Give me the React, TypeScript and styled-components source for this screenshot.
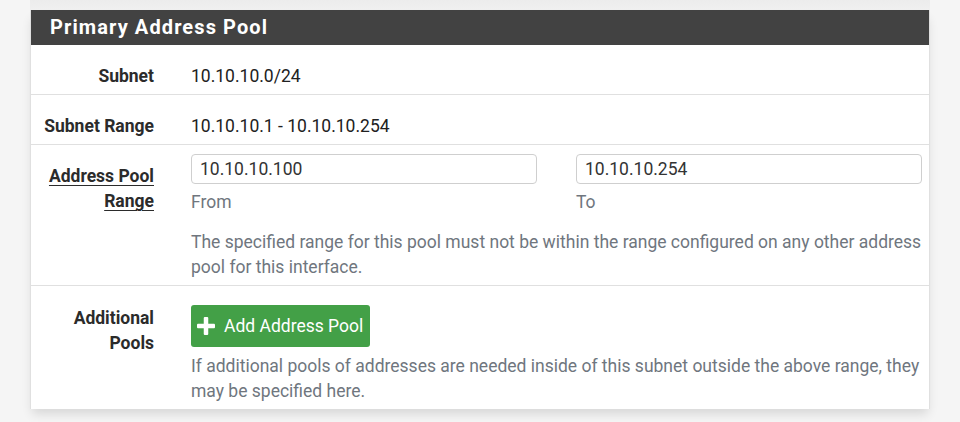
import React from 'react';
import styled, { createGlobalStyle } from 'styled-components';

const GlobalStyle = createGlobalStyle`
   body {
      margin: 0;
      background: #f5f5f5;
      font-family: Roboto, 'Liberation Sans', Arial, sans-serif;
      font-size: 17.5px;
      line-height: 25px;
      color: #212121;
   }
`;

const Page = styled.div`
   padding: 0 30px 14px;
`;

// bottom edge of the panel above, still peeking in at the top
const PrevShadow = styled.div`
   height: 10px;
   background: linear-gradient(#ececec, #f0f0f0);
`;

const Panel = styled.div`
   background: #fff;
   border-left: 1px solid #e0e0e0;
   border-right: 1px solid #e0e0e0;
   box-shadow: 0 7px 10px -2px rgba(0, 0, 0, 0.12);
`;

const Heading = styled.div`
   height: 35px;
   background: #424242;
   color: #fff;
   display: flex;
   align-items: center;
   padding-left: 19px;
   font-size: 20px;
   font-weight: 700;
   letter-spacing: 1.1px;
`;

const Row = styled.div<{ $top?: number }>`
   display: grid;
   grid-template-columns: 123px 1fr;
   column-gap: 37px;
   padding: ${(p) => p.$top ?? 9}px 7px 5px 0;
   border-bottom: 1px solid #e0e0e0;
   &:last-child {
      border-bottom: none;
      padding-bottom: 5px;
   }
`;

const Label = styled.div<{ $pad?: number }>`
   text-align: right;
   font-weight: 700;
   color: #2b2b2b;
   padding-top: ${(p) => p.$pad ?? 10}px;
   span {
      text-decoration: underline;
      text-decoration-thickness: 1px;
      text-underline-offset: 3px;
   }
`;

const Value = styled.div`
   padding-top: 10px;
   color: #212121;
`;

const Pair = styled.div`
   display: grid;
   grid-template-columns: 1fr 1fr;
   column-gap: 39px;
`;

const Field = styled.div`
   display: flex;
   flex-direction: column;
   gap: 6px;
`;

const Input = styled.input`
   box-sizing: border-box;
   height: 30px;
   width: 100%;
   border: 1px solid #cfcfcf;
   border-radius: 4px;
   padding: 0 8px;
   font-family: inherit;
   font-size: 17.5px;
   color: #333;
   outline: none;
`;

const Hint = styled.div<{ $gap?: number }>`
   color: #6f767e;
   margin-top: ${(p) => p.$gap ?? 0}px;
`;

const AddButton = styled.button`
   align-self: flex-start;
   display: flex;
   align-items: center;
   gap: 9px;
   height: 42px;
   padding: 0 7px 0 6px;
   border: none;
   border-radius: 3px;
   background: #43a047;
   color: #fff;
   font-family: inherit;
   font-size: 17.5px;
   cursor: pointer;
`;

const Cell = styled.div`
   display: flex;
   flex-direction: column;
`;

const PlusIcon = () => (
   <svg width="18" height="18" viewBox="0 0 18 18">
      <rect x="6.75" y="0" width="4.5" height="18" rx="1" fill="#fff" />
      <rect x="0" y="6.75" width="18" height="4.5" rx="1" fill="#fff" />
   </svg>
);

const App: React.FC = () => {
   return (
      <>
         <GlobalStyle />
         <Page>
            <PrevShadow />
            <Panel>
               <Heading>Primary Address Pool</Heading>
               <Row>
                  <Label>Subnet</Label>
                  <Value>10.10.10.0/24</Value>
               </Row>
               <Row>
                  <Label>Subnet Range</Label>
                  <Value>10.10.10.1 - 10.10.10.254</Value>
               </Row>
               <Row $top={9}>
                  <Label>
                     <span>Address Pool Range</span>
                  </Label>
                  <Cell>
                     <Pair>
                        <Field>
                           <Input defaultValue="10.10.10.100" />
                           <Hint>From</Hint>
                        </Field>
                        <Field>
                           <Input defaultValue="10.10.10.254" />
                           <Hint>To</Hint>
                        </Field>
                     </Pair>
                     <Hint $gap={15}>
                        The specified range for this pool must not be within the range configured on any other
                        address pool for this interface.
                     </Hint>
                  </Cell>
               </Row>
               <Row $top={19}>
                  <Label $pad={1}>Additional Pools</Label>
                  <Cell>
                     <AddButton>
                        <PlusIcon />
                        Add Address Pool
                     </AddButton>
                     <Hint $gap={7}>
                        If additional pools of addresses are needed inside of this subnet outside the above range,
                        they may be specified here.
                     </Hint>
                  </Cell>
               </Row>
            </Panel>
         </Page>
      </>
   );
};

export default App;
